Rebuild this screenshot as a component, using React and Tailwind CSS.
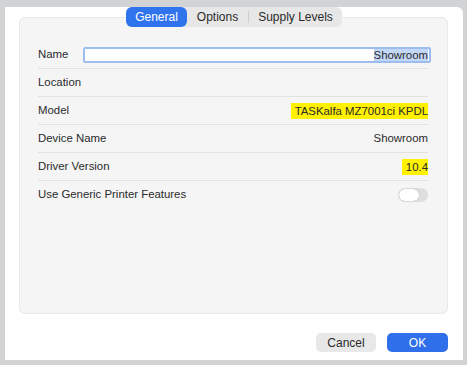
import React from "react";

const rows = [
  { label: "Location", value: "" },
  { label: "Model", value: "TASKalfa MZ7001ci KPDL", mark: true },
  { label: "Device Name", value: "Showroom" },
  { label: "Driver Version", value: "10.4", mark: true },
];

function Row({ children, last }) {
  return (
    <div className={`flex h-[28px] items-center justify-between ${last ? "" : "border-b border-[#e2e2e2]"}`}>
      {children}
    </div>
  );
}

export default function App() {
  return (
    <div
      className="w-[467px] h-[365px] bg-[#d2d3d5] pl-[5px] pt-[7px] pr-[4px] pb-[5px] text-[11.4px] text-[#2a2a2a]"
      style={{ fontFamily: '"Liberation Sans", Arial, sans-serif' }}
    >
      <div className="h-full bg-white rounded-tr-[6px] flex flex-col">
        <div className="flex justify-center relative z-10">
          <div className="flex items-center h-[20px] bg-[#e7e7e7] rounded-[6px] text-[12px]">
            <div className="h-full w-[61px] flex items-center justify-center bg-[#2f74ec] text-white rounded-[6px]">General</div>
            <div className="w-[61px] flex items-center justify-center">Options</div>
            <div className="w-px h-[12px] bg-[#cfcfcf]"></div>
            <div className="w-[93px] flex items-center justify-center">Supply Levels</div>
          </div>
        </div>
        <div className="mx-[14px] mr-[15px] -mt-[10px] h-[297px] bg-[#f5f5f5] border border-[#e9e9e9] rounded-[6px] pl-[18px] pr-[19px] pt-[23px]">
          <Row>
            <span>Name</span>
            <div className="w-[348px] h-[16px] -mr-[3px] border-2 border-[#9dbcef] rounded-[2px] bg-white flex items-center justify-end pr-[1px]">
              <span className="bg-[#c3d8f7] leading-[12px]">Showroom</span>
            </div>
          </Row>
          {rows.map((r) => (
            <Row key={r.label}>
              <span>{r.label}</span>
              {r.mark ? (
                <span className="bg-[#fff100] leading-[16px] pl-[4px]">{r.value}</span>
              ) : (
                <span>{r.value}</span>
              )}
            </Row>
          ))}
          <Row last>
            <span>Use Generic Printer Features</span>
            <div className="w-[30px] h-[14px] rounded-full bg-[#dedede] flex items-center pl-[1px]">
              <div className="w-[20px] h-[12px] rounded-full bg-white shadow-[0_0_1px_rgba(0,0,0,0.3)]"></div>
            </div>
          </Row>
        </div>
        <div className="flex justify-end gap-[11px] mr-[15px] mt-[19px] text-[12px]">
          <button className="w-[60px] h-[19px] rounded-[5px] bg-[#e8e8e8] text-[#2a2a2a]">Cancel</button>
          <button className="w-[61px] h-[19px] rounded-[5px] bg-[#2f6fea] text-white">OK</button>
        </div>
      </div>
    </div>
  );
}
